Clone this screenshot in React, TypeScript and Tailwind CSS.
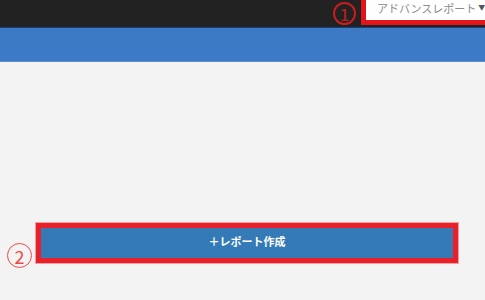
import React from 'react';

const CircleNum: React.FC<{ n: string; className: string }> = ({ n, className }) => (
  <div className={`flex items-center justify-center rounded-full border-2 ${className}`}>
    <span className="leading-none">{n}</span>
  </div>
);

const App: React.FC = () => {
  return (
    <div className="w-[485px] h-[300px] overflow-hidden bg-[#f3f3f3] font-['Noto_Sans_CJK_JP','Noto_Sans',sans-serif]">
      {/* Top bar */}
      <div className="h-[28px] bg-[#222222] flex items-start justify-end overflow-hidden border-b border-[#1a3f73]">
        <CircleNum n="1" className="mt-[2px] mr-[5px] w-[23px] h-[23px] border-[#c81e1e] text-[#c81e1e] text-[17px]" />
        <div className="w-[124px] shrink-0 h-[25px] border-[5px] border-t-0 border-r-0 border-[#e3151b] bg-white flex items-start pl-[11px] overflow-hidden">
          <span className="text-[11px] leading-[17px] text-[#8a8a8a] whitespace-nowrap">アドバンスレポート</span>
          <span className="ml-[2px] mt-[4px] text-[7px] leading-none text-[#555]">▼</span>
        </div>
      </div>

      {/* Blue nav */}
      <div className="h-[34px] bg-[#3c7ac6] border-b border-[#5b8fd0]" />

      {/* Content */}
      <div className="pt-[155px] flex items-center">
        <CircleNum n="2" className="mt-[26px] ml-[7px] mr-[4px] w-[25px] h-[25px] border-[1.5px] border-[#f04848] text-[#f04848] text-[18px]" />
        <div className="w-[422px] h-[40px] border-[5px] border-[#e8202a] outline outline-1 outline-[#f5a0a0]">
          <button className="w-full h-full bg-[#337ab7] text-white font-bold text-[11px] flex items-center justify-center pb-[2px]">
            ＋レポート作成
          </button>
        </div>
      </div>
    </div>
  );
};

export default App;
